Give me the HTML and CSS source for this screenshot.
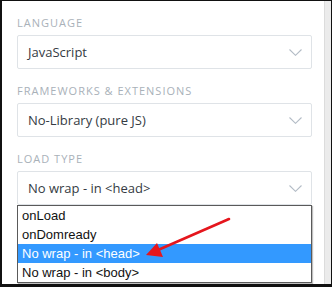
FILE: index.html
```html
<!DOCTYPE html>
<html lang="en">

<head>
    <meta charset="UTF-8">
    <meta name="viewport" content="width=device-width, initial-scale=1.0">
    <title>Settings</title>
    <link rel="stylesheet" href="styles.css">
</head>

<body>
    <div class="frame">
        <div class="panel">
            <div class="field">
                <p class="label">Language</p>
                <div class="select">
                    <span>JavaScript</span>
                    <svg class="chev" width="13" height="7" viewBox="0 0 13 7"><path d="M0.5 0.5 L6.5 6.3 L12.5 0.5" fill="none" stroke="#b3bcc6" stroke-width="1.1"/></svg>
                </div>
            </div>
            <div class="field">
                <p class="label">Frameworks &amp; Extensions</p>
                <div class="select">
                    <span>No-Library (pure JS)</span>
                    <svg class="chev" width="13" height="7" viewBox="0 0 13 7"><path d="M0.5 0.5 L6.5 6.3 L12.5 0.5" fill="none" stroke="#b3bcc6" stroke-width="1.1"/></svg>
                </div>
            </div>
            <div class="field">
                <p class="label">Load type</p>
                <div class="select">
                    <span>No wrap - in &lt;head&gt;</span>
                    <svg class="chev" width="13" height="7" viewBox="0 0 13 7"><path d="M0.5 0.5 L6.5 6.3 L12.5 0.5" fill="none" stroke="#b3bcc6" stroke-width="1.1"/></svg>
                </div>
                <ul class="options">
                    <li>onLoad</li>
                    <li>onDomready</li>
                    <li class="active">No wrap - in &lt;head&gt;</li>
                    <li>No wrap - in &lt;body&gt;</li>
                </ul>
            </div>
        </div>
        <div class="strip"></div>
        <svg class="arrow" width="332" height="287" viewBox="0 0 332 287">
            <line x1="229" y1="219" x2="158" y2="250" stroke="#e5161d" stroke-width="2.6" stroke-linecap="round"/>
            <polygon points="146,255 157,243 163,257" fill="#e5161d"/>
        </svg>
    </div>
</body>

</html>
```

FILE: styles.css
```css
body {
    margin: 0;
    font-family: "Open Sans", "Noto Sans", sans-serif;
}

.frame {
    position: relative;
    display: flex;
    width: 332px;
    height: 287px;
    box-sizing: border-box;
    border: solid #111;
    border-width: 1px 1px 3px 2px;
}

.panel {
    flex: 1;
    background: #fff;
    padding: 15px 12px 0 15px;
}

.strip {
    width: 6px;
    background: #ebebeb;
    border-left: 1px solid #dcdcdc;
}

.field {
    margin-bottom: 15px;
}

.label {
    margin: 0 0 5px;
    font-size: 11px;
    line-height: 14px;
    letter-spacing: 1px;
    text-transform: uppercase;
    color: #a9b1b9;
}

.select {
    display: flex;
    align-items: center;
    justify-content: space-between;
    height: 34px;
    box-sizing: border-box;
    border: 1px solid #dfe3e7;
    border-radius: 2px;
    padding: 0 9px 0 10px;
    font-size: 13px;
    color: #353b43;
}

.options {
    list-style: none;
    margin: 0;
    padding: 0;
    border: 1px solid #5a5a5a;
    box-shadow: 1px 1px 1px rgba(0, 0, 0, 0.25);
    font-family: "Liberation Sans", sans-serif;
    font-size: 13px;
    color: #111;
}

.options li {
    height: 19px;
    line-height: 19px;
    padding-left: 4px;
}

.options li.active {
    background: #3399ff;
    color: #fff;
}

.arrow {
    position: absolute;
    left: -2px;
    top: -1px;
}
```
